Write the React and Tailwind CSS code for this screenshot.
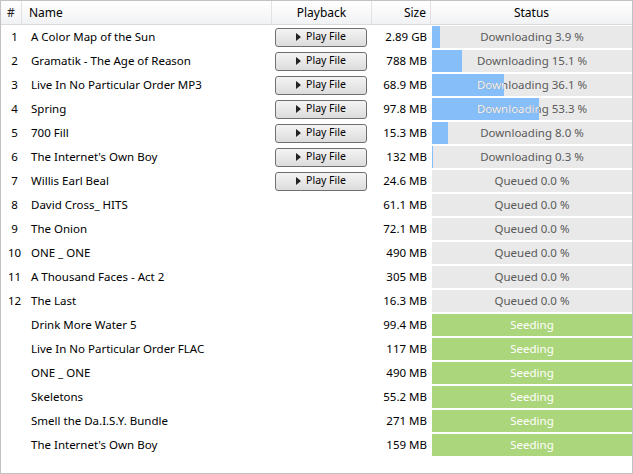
import React from "react";

const rows = [
  { n: "1", name: "A Color Map of the Sun", play: true, size: "2.89 GB", type: "dl", pct: 3.9 },
  { n: "2", name: "Gramatik - The Age of Reason", play: true, size: "788 MB", type: "dl", pct: 15.1 },
  { n: "3", name: "Live In No Particular Order MP3", play: true, size: "68.9 MB", type: "dl", pct: 36.1 },
  { n: "4", name: "Spring", play: true, size: "97.8 MB", type: "dl", pct: 53.3 },
  { n: "5", name: "700 Fill", play: true, size: "15.3 MB", type: "dl", pct: 8.0 },
  { n: "6", name: "The Internet's Own Boy", play: true, size: "132 MB", type: "dl", pct: 0.3 },
  { n: "7", name: "Willis Earl Beal", play: true, size: "24.6 MB", type: "q" },
  { n: "8", name: "David Cross_ HITS", size: "61.1 MB", type: "q" },
  { n: "9", name: "The Onion", size: "72.1 MB", type: "q" },
  { n: "10", name: "ONE _ ONE", size: "490 MB", type: "q" },
  { n: "11", name: "A Thousand Faces - Act 2", size: "305 MB", type: "q" },
  { n: "12", name: "The Last", size: "16.3 MB", type: "q" },
  { n: "", name: "Drink More Water 5", size: "99.4 MB", type: "s" },
  { n: "", name: "Live In No Particular Order FLAC", size: "117 MB", type: "s" },
  { n: "", name: "ONE _ ONE", size: "490 MB", type: "s" },
  { n: "", name: "Skeletons", size: "55.2 MB", type: "s" },
  { n: "", name: "Smell the Da.I.S.Y. Bundle", size: "271 MB", type: "s" },
  { n: "", name: "The Internet's Own Boy", size: "159 MB", type: "s" },
];

const font = { fontFamily: '"Noto Sans", "Open Sans", sans-serif' };

function Status({ r }) {
  if (r.type === "s") {
    return (
      <div className="ml-px my-px h-[22px] bg-[#acd67b] text-white text-[11.5px] flex items-center justify-center">
        Seeding
      </div>
    );
  }
  const label = r.type === "q" ? "Queued 0.0 %" : `Downloading ${r.pct.toFixed(1)} %`;
  const w = r.type === "dl" ? Math.round((r.pct / 100) * 200) : 0;
  return (
    <div className="ml-px my-px h-[22px] bg-[#e9e9e9] relative text-[11.5px]">
      <div className="absolute inset-y-0 left-0 bg-[#86befa]" style={{ width: w }} />
      <div className="absolute inset-0 flex items-center justify-center text-[#5a5a5a]">{label}</div>
      {w > 0 ? (
        <div
          className="absolute inset-0 flex items-center justify-center text-white"
          style={{ clipPath: `inset(0 ${200 - w}px 0 0)` }}
        >
          {label}
        </div>
      ) : null}
    </div>
  );
}

function PlayButton() {
  return (
    <div className="w-[92px] h-[19px] rounded-[3px] border border-[#707070] bg-gradient-to-b from-[#f4f4f4] to-[#dcdcdc] flex items-center justify-center gap-[5px] text-[10.5px] text-black">
      <svg width="5" height="8" viewBox="0 0 5 8"><path d="M0 0 L5 4 L0 8 Z" fill="#222" /></svg>
      <span>Play File</span>
    </div>
  );
}

export default function App() {
  return (
    <div className="w-[633px] h-[474px] border border-[#c2c2c2] bg-white overflow-hidden text-[11.5px] text-black" style={font}>
      <div className="grid grid-cols-[21px_250px_100px_59px_201px] h-[24px] border-b border-[#dadada] bg-gradient-to-b from-white to-[#f1f2f4] text-[12px]">
        <div className="flex items-center justify-center border-r border-[#e2e2e2] text-[#222]">#</div>
        <div className="flex items-center pl-[7px] border-r border-[#e2e2e2]">Name</div>
        <div className="flex items-center justify-center border-r border-[#e2e2e2]">Playback</div>
        <div className="flex items-center justify-end pr-[4px] border-r border-[#e2e2e2]">Size</div>
        <div className="flex items-center justify-center">Status</div>
      </div>
      {rows.map((r, i) => (
        <div key={i} className="grid grid-cols-[21px_250px_100px_59px_201px] h-[24px]">
          <div className="flex items-center justify-center pl-[6px]">{r.n}</div>
          <div className="flex items-center pl-[9px]">{r.name}</div>
          <div className="flex items-center pl-[3px]">{r.play ? <PlayButton /> : null}</div>
          <div className="flex items-center justify-end pr-[4px]">{r.size}</div>
          <Status r={r} />
        </div>
      ))}
    </div>
  );
}
